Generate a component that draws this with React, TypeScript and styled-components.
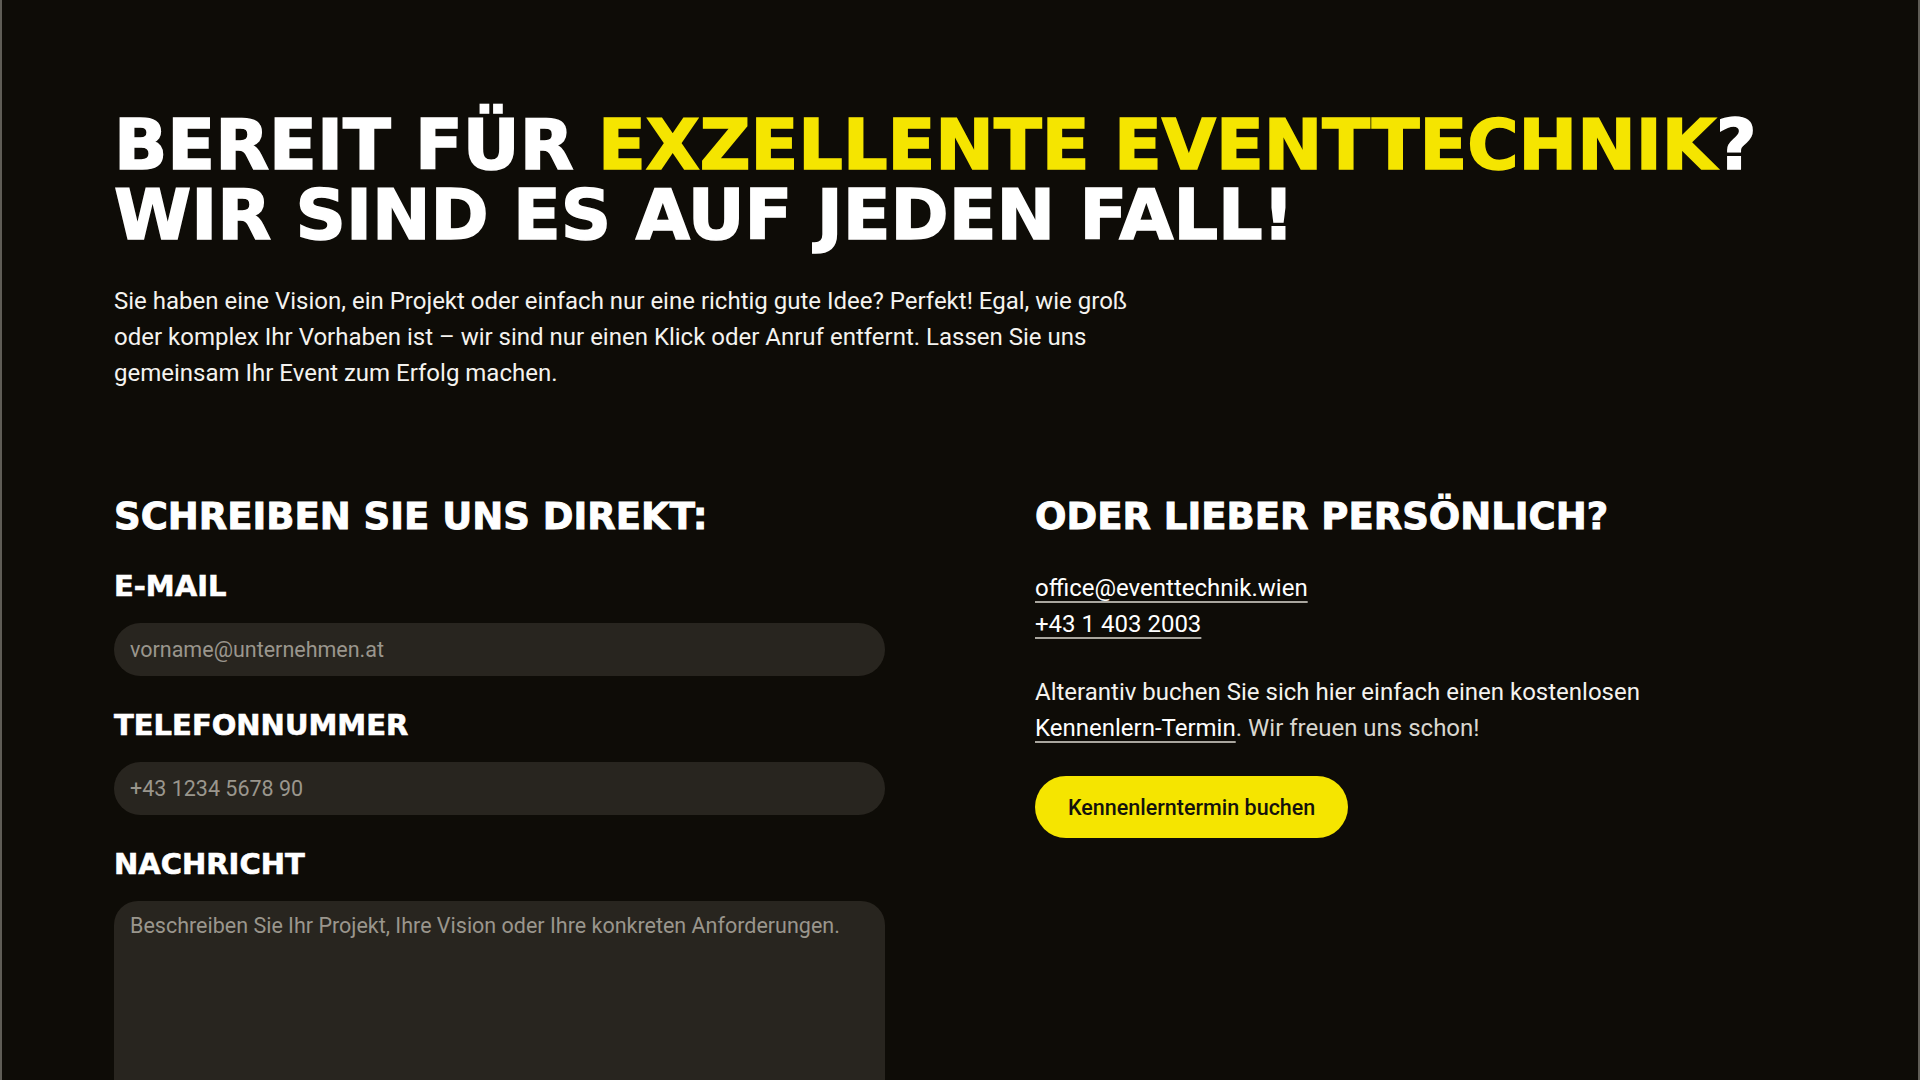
import React from "react";
import styled, { createGlobalStyle } from "styled-components";

const GlobalStyle = createGlobalStyle`
  html, body {
    margin: 0;
    padding: 0;
    background: #0e0c07;
  }
  * { box-sizing: border-box; }
`

const Page = styled.div`
  min-height: 1080px;
  background: #0e0c07;
  color: #f4f3ef;
  border-left: 2px solid #5f5d56;
  border-right: 2px solid #5f5d56;
  padding: 110px 112px 0 112px;
  font-family: Roboto, "Liberation Sans", sans-serif;
  overflow: hidden;
`

const Headline = styled.h1`
  margin: 0;
  font-family: "DejaVu Sans", "Liberation Sans", sans-serif;
  font-weight: 700;
  font-size: 70px;
  line-height: 70px;
  letter-spacing: 0;
  white-space: nowrap;
  text-transform: uppercase;
  color: #ffffff;
  -webkit-text-stroke: 1.6px currentColor;
`

const Highlight = styled.span`
  color: #f5e500;
`

const Intro = styled.p`
  margin: 33px 0 0 0;
  font-size: 24px;
  line-height: 36px;
  color: #f4f3ef;
`

const Columns = styled.div`
  display: grid;
  grid-template-columns: 771px 771px;
  column-gap: 150px;
  margin-top: 103px;
`

const Column = styled.div`
  display: flex;
  flex-direction: column;
`

const SectionTitle = styled.h2`
  margin: 0 0 28px 0;
  font-family: "DejaVu Sans", "Liberation Sans", sans-serif;
  font-weight: 700;
  font-size: 37px;
  line-height: 46px;
  color: #ffffff;
  -webkit-text-stroke: 0.9px currentColor;
`

const Field = styled.div`
  display: flex;
  flex-direction: column;
  margin-bottom: 31px;
`

const Label = styled.label`
  font-family: "DejaVu Sans", "Liberation Sans", sans-serif;
  font-weight: 700;
  font-size: 29px;
  line-height: 36px;
  color: #ffffff;
  margin-bottom: 19px;
  -webkit-text-stroke: 0.6px currentColor;
`

const Input = styled.input`
  width: 100%;
  height: 53px;
  border: none;
  outline: none;
  border-radius: 27px;
  background: #28251f;
  padding: 0 16px;
  font-family: Roboto, "Liberation Sans", sans-serif;
  font-size: 21.5px;
  color: #f4f3ef;

  &::placeholder {
    color: #9a968d;
  }
`

const TextArea = styled.textarea`
  width: 100%;
  height: 260px;
  border: none;
  outline: none;
  resize: none;
  border-radius: 24px;
  background: #28251f;
  padding: 10px 16px;
  font-family: Roboto, "Liberation Sans", sans-serif;
  font-size: 21.5px;
  line-height: 30px;
  color: #f4f3ef;

  &::placeholder {
    color: #9a968d;
  }
`

const ContactLinks = styled.div`
  display: flex;
  flex-direction: column;
  margin-top: 2px;
`

const TextLink = styled.a`
  align-self: flex-start;
  font-size: 24px;
  line-height: 36px;
  color: #ffffff;
  text-decoration: underline;
  text-decoration-color: #a9a69e;
  text-decoration-thickness: 2px;
  text-underline-offset: 5px;
`

const Body = styled.p`
  margin: 32px 0 0 0;
  font-size: 24px;
  line-height: 36px;
  color: #f4f3ef;
`

const Muted = styled.span`
  color: #d9d7d0;
`

const InlineLink = styled.a`
  color: #ffffff;
  text-decoration: underline;
  text-decoration-color: #a9a69e;
  text-decoration-thickness: 2px;
  text-underline-offset: 5px;
`

const PrimaryButton = styled.button`
  align-self: flex-start;
  margin-top: 30px;
  height: 62px;
  padding: 0 33px;
  border: none;
  border-radius: 31px;
  background: #f5e500;
  color: #14120c;
  font-family: Roboto, "Liberation Sans", sans-serif;
  font-size: 21.5px;
  font-weight: 500;
  cursor: pointer;
`

export default function App() {
  return (
    <>
      <GlobalStyle />
      <Page>
        <Headline>
          Bereit für <Highlight>exzellente Eventtechnik</Highlight>?
          <br />
          Wir sind es auf jeden Fall!
        </Headline>

        <Intro>
          Sie haben eine Vision, ein Projekt oder einfach nur eine richtig gute Idee? Perfekt! Egal, wie groß
          <br />
          oder komplex Ihr Vorhaben ist – wir sind nur einen Klick oder Anruf entfernt. Lassen Sie uns
          <br />
          gemeinsam Ihr Event zum Erfolg machen.
        </Intro>

        <Columns>
          <Column as="form" onSubmit={(e: React.FormEvent) => e.preventDefault()}>
            <SectionTitle>SCHREIBEN SIE UNS DIREKT:</SectionTitle>
            <Field>
              <Label htmlFor="email">E-MAIL</Label>
              <Input id="email" type="email" placeholder="vorname@unternehmen.at" />
            </Field>
            <Field>
              <Label htmlFor="phone">TELEFONNUMMER</Label>
              <Input id="phone" type="tel" placeholder="+43 1234 5678 90" />
            </Field>
            <Field>
              <Label htmlFor="message">NACHRICHT</Label>
              <TextArea
                id="message"
                placeholder="Beschreiben Sie Ihr Projekt, Ihre Vision oder Ihre konkreten Anforderungen."
              />
            </Field>
          </Column>

          <Column>
            <SectionTitle>ODER LIEBER PERSÖNLICH?</SectionTitle>
            <ContactLinks>
              <TextLink href="#">office@eventtechnik.wien</TextLink>
              <TextLink href="#">+43 1 403 2003</TextLink>
            </ContactLinks>
            <Body>
              Alterantiv buchen Sie sich hier einfach einen kostenlosen
              <br />
              <InlineLink href="#">Kennenlern-Termin</InlineLink>
              <Muted>. Wir freuen uns schon!</Muted>
            </Body>
            <PrimaryButton type="button">Kennenlerntermin buchen</PrimaryButton>
          </Column>
        </Columns>
      </Page>
    </>
  )
}
